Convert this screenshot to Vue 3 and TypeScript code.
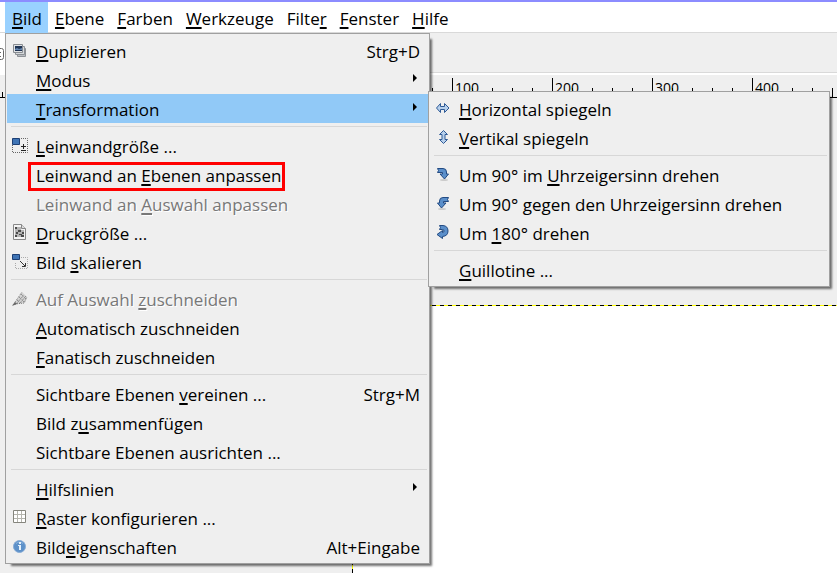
<script setup lang="ts">
import { computed, onBeforeUnmount, onMounted, ref } from 'vue'

type IconName =
  | 'duplicate' | 'canvas' | 'print' | 'scale' | 'crop' | 'grid' | 'info'
  | 'flip-h' | 'flip-v' | 'cw' | 'ccw' | 'half'

interface Entry {
  label: string
  icon?: IconName
  shortcut?: string
  disabled?: boolean
  marked?: boolean
  children?: Entry[][]
  parent?: boolean
}

// An ampersand stands before the letter that is the access key.
const bar: string[] = ['&Bild', '&Ebene', '&Farben', '&Werkzeuge', 'Filte&r', '&Fenster', '&Hilfe']

const transform: Entry[][] = [
  [
    { label: '&Horizontal spiegeln', icon: 'flip-h' },
    { label: '&Vertikal spiegeln', icon: 'flip-v' },
  ],
  [
    { label: 'Um 90° im &Uhrzeigersinn drehen', icon: 'cw' },
    { label: 'Um 90° gegen den Uhrzeigersinn drehen', icon: 'ccw' },
    { label: 'Um &180° drehen', icon: 'half' },
  ],
  [{ label: '&Guillotine ...' }],
]

const imageMenu: Entry[][] = [
  [
    { label: '&Duplizieren', icon: 'duplicate', shortcut: 'Strg+D' },
    { label: '&Modus', parent: true },
    { label: '&Transformation', parent: true, children: transform },
  ],
  [
    { label: '&Leinwandgröße ...', icon: 'canvas' },
    { label: 'Leinwand an &Ebenen anpassen', marked: true },
    { label: 'Leinwand an &Auswahl anpassen', disabled: true },
    { label: '&Druckgröße ...', icon: 'print' },
    { label: 'Bild &skalieren', icon: 'scale' },
  ],
  [
    { label: 'Auf Auswahl &zuschneiden', icon: 'crop', disabled: true },
    { label: '&Automatisch zuschneiden' },
    { label: '&Fanatisch zuschneiden' },
  ],
  [
    { label: 'Sichtbare Ebenen &vereinen ...', shortcut: 'Strg+M' },
    { label: 'Bild z&usammenfügen' },
    { label: 'Sichtbare Ebenen ausrichten ...' },
  ],
  [
    { label: '&Hilfslinien', parent: true },
    { label: '&Raster konfigurieren ...', icon: 'grid' },
    { label: 'Bild&eigenschaften', icon: 'info', shortcut: 'Alt+Eingabe' },
  ],
]

function split(label: string): [string, string, string] {
  const at = label.indexOf('&')
  return at < 0 ? [label, '', ''] : [label.slice(0, at), label[at + 1], label.slice(at + 2)]
}

const icons: Record<IconName, string> = {
  duplicate: `<path d="M5.500 6.500h8v8h-8z" fill="#b9bcc0" stroke="#8d9196"/><path d="M3.500 4.500h9v8h-9z" fill="#d5d8db" stroke="#8d9196"/><path d="M1.500 2.500h9v8h-9z" fill="#dfe2e5" stroke="#888c91"/><path d="M3 4h7v5H3z" fill="#1f3454"/><path d="M3 7l2-1 2 1 3-1v2H3z" fill="#6486b0"/>`,
  canvas: `<path d="M9 1.500h6.500v14H.5V8" fill="none" stroke="#666" stroke-dasharray="1 1"/><path d="M.5 1.500h7v6h-7z" fill="#3f74b5" stroke="#1d3f74"/><path d="M9 9.500h5M11.500 7v5M9 13.500h5" fill="none" stroke="#222"/>`,
  print: `<path d="M1.500.5h8l4 4v11h-12z" fill="#f4f4f4" stroke="#888"/><path d="M9.500.5v4h4" fill="#ddd" stroke="#888"/><path d="M3 3h6v3h3v7H3z" fill="#b4b4b4"/><path d="M3 3h2v2H3zm3 3h3v2H6zM4 8h2v2H4zm6 0h2v2h-2zM7 10h3v1H7zm-4 1h2v2H3zm6 0h3v2H9z" fill="#4c4c4c"/>`,
  scale: `<path d="M9 4.500h6.500v11h-12V9" fill="none" stroke="#aaa" stroke-dasharray="1 1"/><path d="M.5 1.500h7v5h-7z" fill="#3f74b5" stroke="#1d3f74"/><path d="M8 8l5 5M13.500 10v3.500H10" fill="none" stroke="#333"/>`,
  crop: `<path d="M1 15L10 2l5 5-2 6-8 1z" fill="#d3d3d3"/><path d="M1 15L10 2M4 14l8-9M3 14l9-1 3-6M8 13l6-7M9 4l5 5M7 7l5 5M5 10l3 3" fill="none" stroke="#777" stroke-dasharray="1 1"/><path d="M0 16l5-2-2-2z" fill="#666"/>`,
  grid: `<path d="M1.500 1.500h12v12h-12z" fill="#fff" stroke="#85857d"/><path d="M5.500 2v11M9.500 2v11M2 5.500h11M2 9.500h11" fill="none" stroke="#b5b5ae"/>`,
  info: `<circle cx="7.500" cy="8.500" r="6" fill="#5d91c9" stroke="#86abd6"/><path d="M4 5.500a5 5 0 0 1 7 0" fill="none" stroke="#8fb6df"/><path d="M7 4h2v2H7zM6 7h3v5H7V8H6z" fill="#e4f0fb"/>`,
  'flip-h': `<path d="M1.500 8L5.500 3.500v3h4v-3L14 8l-4.500 4.500v-3h-4v3z" fill="#b7d0ec" stroke="#2f5a96"/>`,
  'flip-v': `<path d="M8.500 1.500l4 4h-2.500v5h2.500l-4 4-4-4H7v-5H4.500z" fill="#b7d0ec" stroke="#2f5a96"/>`,
  cw: `<ellipse cx="9" cy="14" rx="4" ry="1" fill="#ccc"/><path d="M2.500 2.500H8q3.500 0 3.500 3.500v2h2l-4 5-4.500-5h2.500V6.500h-5l1-2z" fill="#5b8fca" stroke="#234b83"/>`,
  ccw: `<ellipse cx="7" cy="14" rx="4" ry="1" fill="#ccc"/><path d="M13.500 2.500H8Q4.500 2.500 4.500 6v2h-2l4 5L11 8H8.500V6.500h5l-1-2z" fill="#5b8fca" stroke="#234b83"/>`,
  half: `<path d="M4.500 1.500H8q5 .5 5 5.500T7.500 12.500v2L2 10.500l5.500-4v2q1.500 0 1.500-1.500T7.500 5.500h-3l1-2z" fill="#5b8fca" stroke="#234b83"/>`,
}

// Ruler: image pixel 0 lies at the left edge of the canvas, 352px into the view.
const origin = 352
const viewWidth = ref(window.innerWidth)
const onResize = () => { viewWidth.value = window.innerWidth }
onMounted(() => window.addEventListener('resize', onResize))
onBeforeUnmount(() => window.removeEventListener('resize', onResize))

const ticks = computed(() => {
  const list: { x: number; size: number; value: number }[] = []
  for (let v = -350; v + origin < viewWidth.value; v += 10) {
    list.push({ x: v + origin, value: v, size: v % 100 === 0 ? 20 : v % 20 === 0 ? 10 : 6 })
  }
  return list
})
</script>

<template>
  <div class="app">
    <nav class="menubar" aria-label="Menü">
      <div v-for="(name, i) in bar" :key="name" class="slot">
        <button type="button" class="top" :class="{ open: i === 0 }">
          {{ split(name)[0] }}<u>{{ split(name)[1] }}</u>{{ split(name)[2] }}
        </button>
        <div v-if="i === 0" class="menu main-menu">
          <ul v-for="(group, g) in imageMenu" :key="g">
            <li v-for="entry in group" :key="entry.label">
              <button
                type="button" class="row" :disabled="entry.disabled"
                :class="{ active: entry.children, marked: entry.marked }"
              >
                <span class="icon">
                  <svg v-if="entry.icon" viewBox="0 0 16 16" aria-hidden="true" v-html="icons[entry.icon]" />
                </span>
                <span class="label">{{ split(entry.label)[0] }}<u>{{ split(entry.label)[1] }}</u>{{ split(entry.label)[2] }}</span>
                <span v-if="entry.shortcut" class="shortcut">{{ entry.shortcut }}</span>
                <span v-if="entry.parent" class="arrow" />
              </button>
              <div v-if="entry.children" class="menu sub-menu">
                <ul v-for="(part, p) in entry.children" :key="p">
                  <li v-for="item in part" :key="item.label">
                    <button type="button" class="row">
                      <span class="icon">
                        <svg v-if="item.icon" viewBox="0 0 16 16" aria-hidden="true" v-html="icons[item.icon]" />
                      </span>
                      <span class="label">{{ split(item.label)[0] }}<u>{{ split(item.label)[1] }}</u>{{ split(item.label)[2] }}</span>
                    </button>
                  </li>
                </ul>
              </div>
            </li>
          </ul>
        </div>
      </div>
    </nav>

    <div class="tabs">
      <div class="tab">
        <svg class="close" viewBox="0 0 4 12" aria-hidden="true">
          <path d="M0 .5h1.500q2 0 2 2v7q0 2-2 2H0M0 4.500h1M0 8.500h1" fill="none" stroke="#666" />
        </svg>
      </div>
      <div class="tab-rest" />
    </div>

    <svg class="ruler" aria-hidden="true">
      <path d="M0 22.500h4000" stroke="#000" />
      <g v-for="t in ticks" :key="t.x">
        <path :d="`M${t.x + 0.5} 22v-${t.size - 1}`" stroke="#000" />
        <text v-if="t.size === 20 && t.value > 0" :x="t.x + 3" y="18">{{ t.value }}</text>
      </g>
    </svg>

    <main class="view">
      <div class="canvas" />
    </main>
  </div>
</template>

<style>
body {
  margin: 0;
  background: #efefef;
}
</style>

<style scoped>
.app {
  display: flex;
  flex-direction: column;
  box-sizing: border-box;
  min-height: 100vh;
  overflow: hidden;
  border-top: 2px solid #8c8cff;
  background: #efefef;
  color: #000;
  font: 17px/29px "Open Sans", "Noto Sans", sans-serif;
}
button {
  margin: 0;
  border: 0;
  background: none;
  color: inherit;
  font: inherit;
  text-align: left;
  white-space: nowrap;
}
u {
  text-decoration: underline 2px;
  text-underline-offset: 2px;
  text-decoration-skip-ink: none;
}
.menubar {
  display: flex;
  height: 31px;
  padding-left: 5px;
  background: #fff;
  box-shadow: inset 0 -1px #d9d9d9;
}
.slot {
  position: relative;
}
.top {
  height: 31px;
  padding: 2px 6px 0 7px;
}
.open {
  background: #99d1ff;
}
.menu {
  position: absolute;
  z-index: 2;
  box-sizing: border-box;
  padding: 2px 1px;
  border: 1px solid #a0a0a0;
  background: #efefef;
  box-shadow: 4px 4px 2px -2px rgba(0, 0, 0, 0.55);
}
.main-menu {
  top: 100%;
  left: 0;
  width: 425px;
}
.sub-menu {
  top: -3px;
  left: 100%;
  width: 402px;
}
ul {
  margin: 0;
  padding: 0;
  list-style: none;
}
ul + ul::before {
  content: "";
  display: block;
  height: 1px;
  margin: 3px 1px 4px 4px;
  background: #d7d7d7;
}
li {
  position: relative;
}
.row {
  position: relative;
  display: flex;
  align-items: center;
  gap: 8px;
  width: 100%;
  height: 29px;
  padding: 0 8px 0 5px;
}
.label,
.shortcut {
  padding-top: 2px;
}
.label {
  flex: 1;
}
.active {
  background: #91c9f7;
}
.row:disabled {
  color: #787878;
  text-shadow: 1px 1px #fff;
}
.marked::after {
  content: "";
  position: absolute;
  top: 2px;
  left: 21px;
  box-sizing: border-box;
  width: 257px;
  height: 29px;
  border: 3px solid #f00;
}
.icon,
.icon svg {
  display: block;
  width: 16px;
  height: 16px;
}
.icon {
  margin-bottom: 1px;
}
.arrow {
  margin: 0 3px 4px 0;
  border: solid transparent;
  border-width: 4px 0 4px 4px;
  border-left-color: #000;
}
.tabs {
  display: flex;
  height: 42px;
}
.tab {
  flex: 0 1 300px;
  display: flex;
  align-items: center;
  background: #fff;
}
.close {
  width: 4px;
  height: 12px;
}
.tab-rest {
  flex: 1;
  height: 39px;
  border-bottom: 1px solid #d9d9d9;
  box-shadow: 0 2px #fff;
}
.ruler {
  display: block;
  width: 100%;
  height: 24px;
  font-size: 14px;
}
.view {
  flex: 1;
  display: flex;
  padding: 206px 0 0 352px;
}
.canvas {
  flex: 1;
  min-height: 268px;
  background:
    repeating-linear-gradient(90deg, #000 0 4px, #ff0 4px 8px) top / 100% 1px no-repeat,
    repeating-linear-gradient(#000 0 4px, #ff0 4px 8px) left / 1px 100% no-repeat,
    #fff;
}
</style>
